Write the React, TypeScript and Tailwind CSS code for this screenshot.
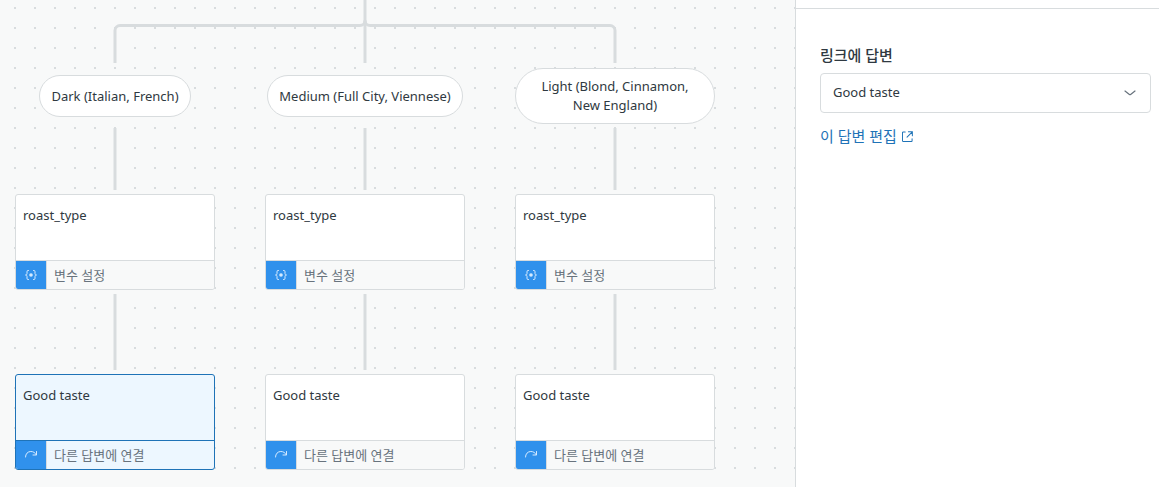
import type { ReactNode } from "react";

type StepKind = "variable" | "link";

interface Branch {
  condition: string;
  variable: string;
  answer: string;
  selected?: boolean;
}

const branches: Branch[] = [
  {
    condition: "Dark (Italian, French)",
    variable: "roast_type",
    answer: "Good taste",
    selected: true,
  },
  {
    condition: "Medium (Full City, Viennese)",
    variable: "roast_type",
    answer: "Good taste",
  },
  {
    condition: "Light (Blond, Cinnamon, New\u00a0England)",
    variable: "roast_type",
    answer: "Good taste",
  },
];

const stepLabels: Record<StepKind, string> = {
  variable: "변수 설정",
  link: "다른 답변에 연결",
};

const stepIcons: Record<StepKind, ReactNode> = {
  variable: (
    <svg
      width="12"
      height="12"
      viewBox="0 0 12 12"
      fill="none"
      stroke="currentColor"
      strokeLinecap="round"
      aria-hidden="true"
    >
      <path d="M3.5 1.5H3c-.8 0-1 .5-1 1.200v1.900C2 5.400 1.500 6 .5 6 1.500 6 2 6.600 2 7.400v1.900c0 .7.2 1.200 1 1.200h.5M8.500 1.500H9c.8 0 1 .5 1 1.200v1.900c0 .8.5 1.400 1.500 1.400-1 0-1.500.6-1.500 1.400v1.900c0 .7-.2 1.200-1 1.200h-.5" />
      <circle cx="6" cy="6" r="1.800" fill="currentColor" stroke="none" />
    </svg>
  ),
  link: (
    <svg
      width="12"
      height="12"
      viewBox="0 0 12 12"
      fill="none"
      stroke="currentColor"
      strokeLinecap="round"
      strokeLinejoin="round"
      aria-hidden="true"
    >
      <path d="M.5 8C.5 4.800 2.800 2.500 5.800 2.500c2.500 0 4.400 1.200 5.500 3.300" />
      <path d="M11.500 2.500v3.500H8" />
    </svg>
  ),
};

// Splits the incoming path into one line per branch
function BranchConnector() {
  return (
    <svg
      className="block h-16 w-[700px] text-[#d8dcde]"
      viewBox="0 0 700 64"
      fill="none"
      stroke="currentColor"
      strokeWidth="3"
      aria-hidden="true"
    >
      <path d="M350 0V63" />
      <path d="M100 63V30.500a5 5 0 0 1 5-5H345a5 5 0 0 0 5-5" />
      <path d="M600 63V30.500a5 5 0 0 0-5-5H355a5 5 0 0 1-5-5" />
    </svg>
  );
}

function Connector({ className }: { className: string }) {
  return (
    <svg
      className={`w-1 pb-1 text-[#d8dcde] ${className}`}
      viewBox="0 0 4 60"
      preserveAspectRatio="none"
      fill="none"
      stroke="currentColor"
      strokeWidth="3"
      aria-hidden="true"
    >
      <path d="M2 0V60" />
    </svg>
  );
}

function Condition({ children }: { children: ReactNode }) {
  return (
    <div className="flex h-16 max-w-full items-center">
      <div className="flex min-h-[42px] max-w-full items-center rounded-[28px] border border-[#d8dcde] bg-white px-[11px] py-2 text-center leading-[19px]">
        {children}
      </div>
    </div>
  );
}

interface StepProps {
  kind: StepKind;
  title: string;
  selected?: boolean;
}

function Step({ kind, title, selected = false }: StepProps) {
  const border = selected ? "border-[#1f73b7]" : "border-[#d8dcde]";

  return (
    <div
      className={`w-full overflow-hidden rounded-[3px] border ${border} ${
        selected ? "bg-[#edf7ff]" : "bg-white"
      }`}
    >
      <div className="h-[65px] px-[7px] py-[10px] leading-5">{title}</div>
      <div
        className={`flex h-[29px] items-stretch border-t ${border} ${
          selected ? "" : "bg-[#f8f9f9]"
        }`}
      >
        <span className="flex w-[31px] items-center justify-center border-r border-[#d8dcde] bg-[#3091ec] bg-clip-padding text-[#d5eaff]">
          {stepIcons[kind]}
        </span>
        <span className="px-[7px] leading-7 text-[#68737d]">
          {stepLabels[kind]}
        </span>
      </div>
    </div>
  );
}

function FlowCanvas() {
  return (
    <main className="min-w-0 flex-1 overflow-hidden bg-[#f8f9f9] bg-[conic-gradient(from_270deg_at_2px_2px,#d8dcde_90deg,transparent_90deg)] bg-[length:20px_20px] bg-[position:14px_7px] px-[15px]">
      <BranchConnector />
      <div className="grid w-[700px] grid-cols-3 gap-[50px]">
        {branches.map((branch) => (
          <div
            key={branch.condition}
            className="flex min-w-0 flex-col items-center"
          >
            <Condition>{branch.condition}</Condition>
            <Connector className="h-[66px]" />
            <Step kind="variable" title={branch.variable} />
            <Connector className="mt-1 h-20" />
            <Step
              kind="link"
              title={branch.answer}
              selected={branch.selected}
            />
          </div>
        ))}
      </div>
    </main>
  );
}

function Sidebar() {
  return (
    <aside className="w-[364px] shrink-0 border-l border-[#d8dcde] bg-white">
      <div className="h-[9px] border-b border-[#d8dcde]" />
      <div className="pt-9 pr-2 pl-6 text-[15px]">
        <label
          htmlFor="linked-answer"
          className="block leading-5 font-medium text-[#2f3941]"
        >
          링크에 답변
        </label>
        <div className="mt-2 grid items-center">
          <select
            id="linked-answer"
            defaultValue="good-taste"
            className="col-start-1 row-start-1 h-10 w-full appearance-none rounded border border-[#d8dcde] bg-white pr-9 pl-3 text-[13px]"
          >
            <option value="good-taste">Good taste</option>
          </select>
          <svg
            className="pointer-events-none col-start-1 row-start-1 mr-[15px] justify-self-end text-[#68737d]"
            width="12"
            height="12"
            viewBox="0 0 12 12"
            fill="none"
            stroke="currentColor"
            strokeWidth="1.200"
            strokeLinecap="round"
            aria-hidden="true"
          >
            <path d="M1 4l4.400 3.500c.4.300.8.300 1.200 0L11 4" />
          </svg>
        </div>
        <a
          href="#edit"
          className="mt-[13px] inline-flex items-center gap-[5px] leading-5 text-[#1f73b7]"
        >
          이 답변 편집
          <svg
            width="11"
            height="11"
            viewBox="0 0 12 12"
            fill="none"
            stroke="currentColor"
            strokeWidth="1.100"
            strokeLinecap="round"
            aria-hidden="true"
          >
            <path d="M3.500 1H1.500a1 1 0 0 0-1 1v8.500a1 1 0 0 0 1 1h8.500a1 1 0 0 0 1-1v-2" />
            <path d="M7 .900h4.300v4.300M11 1.200 5.500 6.700" />
          </svg>
        </a>
      </div>
    </aside>
  );
}

export default function App() {
  return (
    <div className="flex min-h-screen font-['Noto_Sans','Noto_Sans_CJK_KR',sans-serif] text-[13px] text-[#2f3941]">
      <FlowCanvas />
      <Sidebar />
    </div>
  );
}
